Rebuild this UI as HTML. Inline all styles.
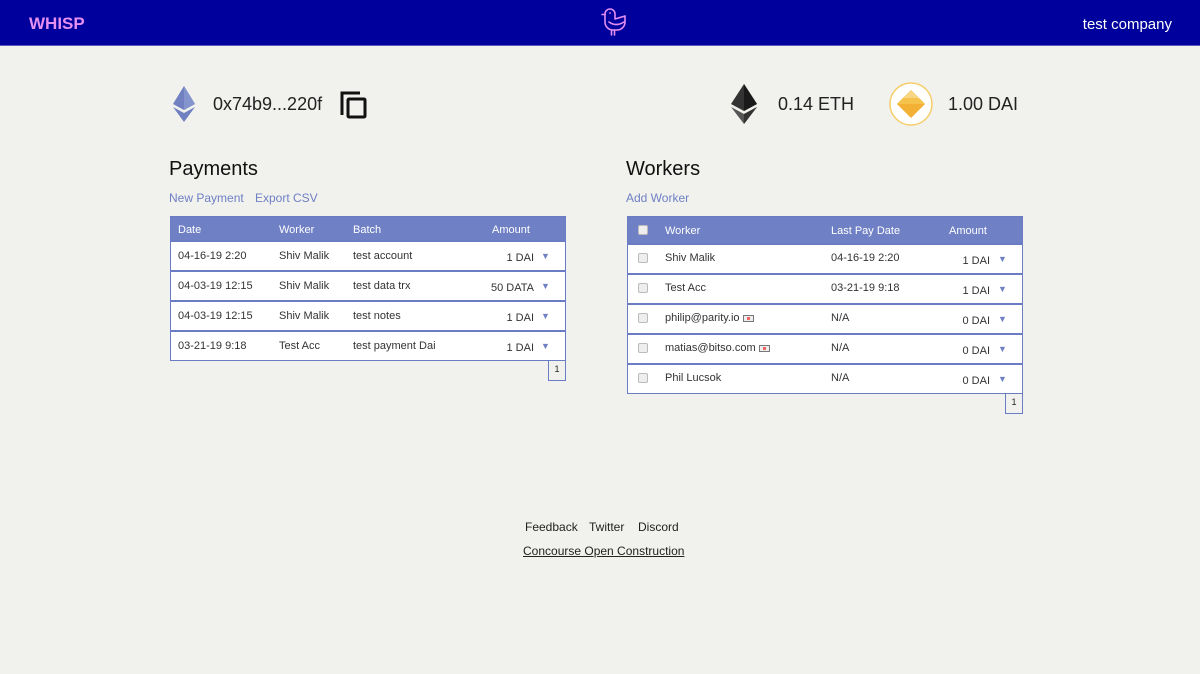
<!DOCTYPE html>
<html><head><meta charset="utf-8"><style>
*{margin:0;padding:0;box-sizing:border-box}
body{width:1200px;height:674px;background:#f1f1ee;font-family:"Liberation Sans",sans-serif;position:relative;overflow:hidden;color:#222}
.hdr{position:absolute;left:0;top:0;width:1200px;height:46px;background:#00009c;border-bottom:1px solid #5a5ac0}
.a{position:absolute;white-space:nowrap}
.tbl{position:absolute;border:1px solid #6a7cc4;background:#fff}
.th{background:#6f80c4;color:#fff;font-size:11px;position:relative}
.tr{position:relative;border-top:2px solid #6a7cc4;font-size:11px;color:#333}
.arr{color:#6f80c4;font-size:9px}
.cb{position:absolute;width:10px;height:10px;border:1px solid #bbb;background:#eee;border-radius:2px}
.pg{position:absolute;width:18px;height:20px;border:1px solid #6a7cc4;border-top:none;font-size:9px;text-align:center;line-height:16px;background:#f1f1ee}
.mail{display:inline-block;width:11px;height:7px;border:1px solid #777;background:#eee;vertical-align:middle;margin-left:3px;position:relative}
.mail:after{content:"";position:absolute;left:3px;top:1px;width:3px;height:3px;background:#e66}
</style></head><body>
<div class="hdr"></div>
<div class="a" style="left:29px;top:14px;color:#e58ff0;font-weight:bold;font-size:17px">WHISP</div>
<svg class="a" style="left:599px;top:5px" width="30" height="32" viewBox="0 0 30 32" fill="none" stroke="#e58ff0" stroke-width="1.6" stroke-linecap="round" stroke-linejoin="round"><path d="M6 9 a5 5 0 0 1 10 0 v5 l10 -3 v6 a8 8 0 0 1 -8 8 h-4 a8 8 0 0 1 -8 -8 z"/><path d="M3 9.5 h3"/><circle cx="11" cy="8" r="0.9" fill="#e58ff0" stroke="none"/><path d="M10 17 q7 5 15 0"/><path d="M12.5 25 v5 M15.5 25 v5"/></svg>
<div class="a" style="right:28px;top:16px;color:#fff;font-size:15px">test company</div>

<svg class="a" style="left:173px;top:86px" width="22" height="36" viewBox="0 0 22 36"><path d="M11 0 L22 18 L11 24 L0 18Z" fill="#7080c0"/><path d="M0 21 L11 27 L22 21 L11 36Z" fill="#7080c0"/><path d="M11 0 L11 24 L22 18Z" fill="#8494cc"/></svg>
<div class="a" style="left:213px;top:94px;font-size:18px">0x74b9...220f</div>
<svg class="a" style="left:339px;top:90px" width="30" height="30" viewBox="0 0 30 30" fill="none" stroke="#111" stroke-width="3"><path d="M3 25 V3 H21"/><rect x="9" y="9" width="17" height="18" rx="1"/></svg>

<svg class="a" style="left:731px;top:84px" width="26" height="40" viewBox="0 0 26 40"><path d="M13 0 L26 20 L13 27 L0 20Z" fill="#333"/><path d="M13 0 L13 27 L26 20Z" fill="#1a1a1a"/><path d="M0 23 L13 30 L26 23 L13 40Z" fill="#555"/><path d="M13 30 L26 23 L13 40Z" fill="#333"/></svg>
<div class="a" style="left:778px;top:94px;font-size:18px">0.14 ETH</div>
<svg class="a" style="left:889px;top:82px" width="44" height="44" viewBox="0 0 44 44"><circle cx="22" cy="22" r="21" fill="#fff" stroke="#f5cf6a" stroke-width="1.5"/><path d="M22 8 L36 22 L22 36 L8 22Z" fill="#f2b134"/><path d="M22 8 L30 16 L22 16 L14 16Z" fill="#f8d580"/><path d="M14 16 L22 16 L30 16 L36 22 L8 22Z" fill="#f5c24c"/></svg>
<div class="a" style="left:948px;top:94px;font-size:18px">1.00 DAI</div>

<div class="a" style="left:169px;top:158px;font-size:20px;color:#111">Payments</div>
<div class="a" style="left:169px;top:191px;font-size:12px;color:#6f80c4">New Payment</div>
<div class="a" style="left:255px;top:191px;font-size:12px;color:#6f80c4">Export CSV</div>
<div class="tbl" style="left:170px;top:216px;width:396px;height:145px">
 <div class="th" style="height:23px"><span class="a" style="left:7px;top:7px">Date</span><span class="a" style="left:108px;top:7px">Worker</span><span class="a" style="left:182px;top:7px">Batch</span><span class="a" style="left:321px;top:7px">Amount</span></div>
 <div class="tr" style="height:30px"><span class="a" style="left:7px;top:8px">04-16-19 2:20</span><span class="a" style="left:108px;top:8px">Shiv Malik</span><span class="a" style="left:182px;top:8px">test account</span><span class="a" style="right:31px;top:10px">1 DAI</span><span class="a arr" style="left:370px;top:9px">▼</span></div>
 <div class="tr" style="height:30px"><span class="a" style="left:7px;top:8px">04-03-19 12:15</span><span class="a" style="left:108px;top:8px">Shiv Malik</span><span class="a" style="left:182px;top:8px">test data trx</span><span class="a" style="right:31px;top:10px">50 DATA</span><span class="a arr" style="left:370px;top:9px">▼</span></div>
 <div class="tr" style="height:30px"><span class="a" style="left:7px;top:8px">04-03-19 12:15</span><span class="a" style="left:108px;top:8px">Shiv Malik</span><span class="a" style="left:182px;top:8px">test notes</span><span class="a" style="right:31px;top:10px">1 DAI</span><span class="a arr" style="left:370px;top:9px">▼</span></div>
 <div class="tr" style="height:30px"><span class="a" style="left:7px;top:8px">03-21-19 9:18</span><span class="a" style="left:108px;top:8px">Test Acc</span><span class="a" style="left:182px;top:8px">test payment Dai</span><span class="a" style="right:31px;top:10px">1 DAI</span><span class="a arr" style="left:370px;top:9px">▼</span></div>
</div>
<div class="pg" style="left:548px;top:361px">1</div>

<div class="a" style="left:626px;top:158px;font-size:20px;color:#111">Workers</div>
<div class="a" style="left:626px;top:191px;font-size:12px;color:#6f80c4">Add Worker</div>
<div class="tbl" style="left:627px;top:216px;width:396px;height:178px">
 <div class="th" style="height:26px"><span class="cb" style="left:10px;top:8px"></span><span class="a" style="left:37px;top:8px">Worker</span><span class="a" style="left:203px;top:8px">Last Pay Date</span><span class="a" style="left:321px;top:8px">Amount</span></div>
 <div class="tr" style="height:30px"><span class="cb" style="left:10px;top:8px"></span><span class="a" style="left:37px;top:7px">Shiv Malik</span><span class="a" style="left:203px;top:7px">04-16-19 2:20</span><span class="a" style="right:32px;top:10px">1 DAI</span><span class="a arr" style="left:370px;top:9px">▼</span></div>
 <div class="tr" style="height:30px"><span class="cb" style="left:10px;top:8px"></span><span class="a" style="left:37px;top:7px">Test Acc</span><span class="a" style="left:203px;top:7px">03-21-19 9:18</span><span class="a" style="right:32px;top:10px">1 DAI</span><span class="a arr" style="left:370px;top:9px">▼</span></div>
 <div class="tr" style="height:30px"><span class="cb" style="left:10px;top:8px"></span><span class="a" style="left:37px;top:7px">philip@parity.io<i class="mail"></i></span><span class="a" style="left:203px;top:7px">N/A</span><span class="a" style="right:32px;top:10px">0 DAI</span><span class="a arr" style="left:370px;top:9px">▼</span></div>
 <div class="tr" style="height:30px"><span class="cb" style="left:10px;top:8px"></span><span class="a" style="left:37px;top:7px">matias@bitso.com<i class="mail"></i></span><span class="a" style="left:203px;top:7px">N/A</span><span class="a" style="right:32px;top:10px">0 DAI</span><span class="a arr" style="left:370px;top:9px">▼</span></div>
 <div class="tr" style="height:30px"><span class="cb" style="left:10px;top:8px"></span><span class="a" style="left:37px;top:7px">Phil Lucsok</span><span class="a" style="left:203px;top:7px">N/A</span><span class="a" style="right:32px;top:10px">0 DAI</span><span class="a arr" style="left:370px;top:9px">▼</span></div>
</div>
<div class="pg" style="left:1005px;top:394px">1</div>

<div class="a" style="left:525px;top:520px;font-size:12px;color:#222">Feedback</div>
<div class="a" style="left:589px;top:520px;font-size:12px;color:#222">Twitter</div>
<div class="a" style="left:638px;top:520px;font-size:12px;color:#222">Discord</div>
<div class="a" style="left:523px;top:544px;font-size:12px;color:#222;text-decoration:underline">Concourse Open Construction</div>
</body></html>
